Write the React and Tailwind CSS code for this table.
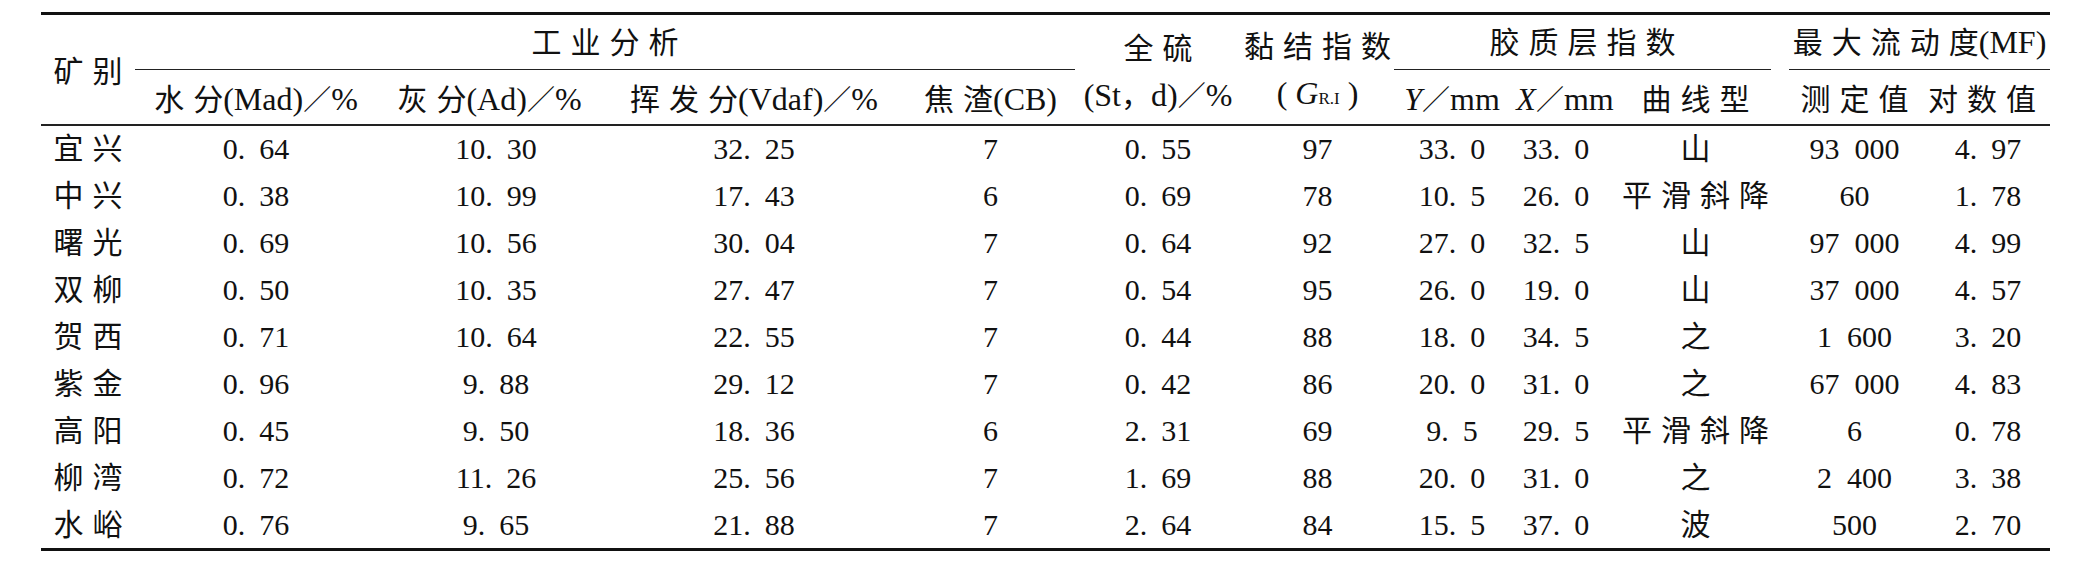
import React from "react";

const rows = [
  ["宜兴", "0.64", "10.30", "32.25", "7", "0.55", "97", "33.0", "33.0", "山", "93 000", "4.97"],
  ["中兴", "0.38", "10.99", "17.43", "6", "0.69", "78", "10.5", "26.0", "平滑斜降", "60", "1.78"],
  ["曙光", "0.69", "10.56", "30.04", "7", "0.64", "92", "27.0", "32.5", "山", "97 000", "4.99"],
  ["双柳", "0.50", "10.35", "27.47", "7", "0.54", "95", "26.0", "19.0", "山", "37 000", "4.57"],
  ["贺西", "0.71", "10.64", "22.55", "7", "0.44", "88", "18.0", "34.5", "之", "1 600", "3.20"],
  ["紫金", "0.96", "9.88", "29.12", "7", "0.42", "86", "20.0", "31.0", "之", "67 000", "4.83"],
  ["高阳", "0.45", "9.50", "18.36", "6", "2.31", "69", "9.5", "29.5", "平滑斜降", "6", "0.78"],
  ["柳湾", "0.72", "11.26", "25.56", "7", "1.69", "88", "20.0", "31.0", "之", "2 400", "3.38"],
  ["水峪", "0.76", "9.65", "21.88", "7", "2.64", "84", "15.5", "37.0", "波", "500", "2.70"],
];

const colWidths = [
  "w-[94px]", "w-[242px]", "w-[225px]", "w-[304px]", "w-[169px]", "w-[166px]",
  "w-[153px]", "w-[116px]", "w-[110px]", "w-[151px]", "w-[155px]", "w-[124px]",
];

// small nudges so the numbers sit where the print has them
const dataPad = ["", "", "pl-[13px]", "", "", "", "", "", "pr-[18px]", "", "pl-[12px]", ""];

// spaced-out chinese, no spacing after the last char
const Zh = ({ children }) => (
  <>
    <span className="tracking-[9px]">{children.slice(0, -1)}</span>
    {children.slice(-1)}
  </>
);

const Num = ({ v }) => {
  const [a, b] = v.split(".");
  return (
    <>
      {a.replace(" ", "\u2002")}
      {b !== undefined && (
        <>
          <span className="mr-[14px]">.</span>
          {b}
        </>
      )}
    </>
  );
};

const Lat = ({ children }) => <span className="text-[32px]">{children}</span>;

const Slash = () => <span className="text-[28px]">／</span>;

export default function App() {
  return (
    <div className="bg-white w-[2085px] h-[562px] pt-[12px] pl-[41px] text-[30px] text-[#111] font-['Liberation_Serif','Noto_Sans_CJK_SC',serif]">
      <div className="w-[2009px] border-t-[3px] border-b-[3px] border-[#111]">
        <table className="table-fixed border-collapse w-[2009px] whitespace-nowrap">
          <colgroup>
            {colWidths.map((w, i) => (
              <col key={i} className={w} />
            ))}
          </colgroup>
          <thead className="border-b-2 border-[#222]">
            <tr>
              <th rowSpan={2} className="p-0 font-normal text-center align-middle pt-[4px]">
                <Zh>矿别</Zh>
              </th>
              <th colSpan={4} className="p-0 font-normal align-bottom">
                <div className="h-[55px] flex items-center justify-center border-b border-[#222]">
                  <span><Zh>工业分析</Zh></span>
                </div>
              </th>
              <th rowSpan={2} className="p-0 font-normal text-center align-middle pt-[6px] leading-[47px]">
                <div>
                  <Zh>全硫</Zh>
                </div>
                <div>
                  <Lat>(St</Lat>，<Lat>d)</Lat>
                  <Slash />
                  <Lat>%</Lat>
                </div>
              </th>
              <th rowSpan={2} className="p-0 font-normal text-center align-middle pt-[6px] leading-[47px]">
                <div>
                  <Zh>黏结指数</Zh>
                </div>
                <div>
                  <Lat>(</Lat>
                  <i className="ml-[8px] text-[32px]">G</i>
                  <span className="text-[17px] mr-[8px]">R.I</span>
                  <Lat>)</Lat>
                </div>
              </th>
              <th colSpan={3} className="p-0 font-normal align-bottom">
                <div className="h-[55px] flex items-center justify-center border-b border-[#222]">
                  <span><Zh>胶质层指数</Zh></span>
                </div>
              </th>
              <th colSpan={2} className="p-0 font-normal align-bottom">
                <div className="h-[55px] ml-[18px] flex items-center justify-center border-b border-[#222]">
                  <span>
                    <Zh>最大流动度</Zh>
                    <Lat>(MF)</Lat>
                  </span>
                </div>
              </th>
            </tr>
            <tr className="h-[55px]">
              <th className="p-0 pt-[4px] font-normal text-center">
                <Zh>水分</Zh>
                <Lat>(Mad)</Lat>
                <Slash />
                <Lat>%</Lat>
              </th>
              <th className="p-0 pt-[4px] font-normal text-center">
                <Zh>灰分</Zh>
                <Lat>(Ad)</Lat>
                <Slash />
                <Lat>%</Lat>
              </th>
              <th className="p-0 pt-[4px] font-normal text-center">
                <Zh>挥发分</Zh>
                <Lat>(Vdaf)</Lat>
                <Slash />
                <Lat>%</Lat>
              </th>
              <th className="p-0 pt-[4px] font-normal text-center">
                <Zh>焦渣</Zh>
                <Lat>(CB)</Lat>
              </th>
              <th className="p-0 pt-[4px] font-normal text-center">
                <i className="text-[32px]">Y</i>
                <Slash />
                <Lat>mm</Lat>
              </th>
              <th className="p-0 pt-[4px] font-normal text-center">
                <i className="text-[32px]">X</i>
                <Slash />
                <Lat>mm</Lat>
              </th>
              <th className="p-0 pt-[4px] font-normal text-center">
                <Zh>曲线型</Zh>
              </th>
              <th className="p-0 pt-[4px] pl-[12px] font-normal text-center">
                <Zh>测定值</Zh>
              </th>
              <th className="p-0 pt-[4px] pr-[12px] font-normal text-center">
                <Zh>对数值</Zh>
              </th>
            </tr>
          </thead>
          <tbody>
            {rows.map((r) => (
              <tr key={r[0]} className="h-[47px]">
                {r.map((v, i) => (
                  <td
                    key={i}
                    className={`p-0 text-center align-middle leading-[40px] ${dataPad[i]}`}
                  >
                    {i === 0 || i === 9 ? <Zh>{v}</Zh> : <Num v={v} />}
                  </td>
                ))}
              </tr>
            ))}
          </tbody>
        </table>
      </div>
    </div>
  );
}
